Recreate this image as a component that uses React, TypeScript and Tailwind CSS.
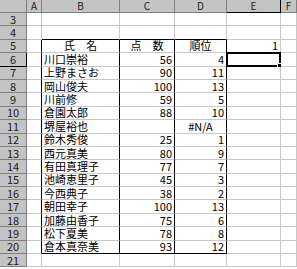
import React from "react";

const colLetters = ["A", "B", "C", "D", "E", "F"];

const people = [
  { name: "川口崇裕", score: "56", rank: "4" },
  { name: "上野まさお", score: "90", rank: "11" },
  { name: "岡山俊夫", score: "100", rank: "13" },
  { name: "川前修", score: "59", rank: "5" },
  { name: "倉園太郎", score: "88", rank: "10" },
  { name: "堺屋裕也", score: "", rank: "#N/A" },
  { name: "鈴木秀俊", score: "25", rank: "1" },
  { name: "西元真美", score: "80", rank: "9" },
  { name: "有田真理子", score: "77", rank: "7" },
  { name: "池崎恵里子", score: "45", rank: "3" },
  { name: "今西典子", score: "38", rank: "2" },
  { name: "朝田幸子", score: "100", rank: "13" },
  { name: "加藤由香子", score: "75", rank: "6" },
  { name: "松下夏美", score: "78", rank: "8" },
  { name: "倉本真奈美", score: "93", rank: "12" },
];

const rowNums = Array.from({ length: 19 }, (_, i) => i + 3);

function cellText(r: number, c: number): { text: string; align: string } {
  if (r === 5) {
    if (c === 2) return { text: "氏　名", align: "justify-center" };
    if (c === 3) return { text: "点　数", align: "justify-center" };
    if (c === 4) return { text: "順位", align: "justify-center" };
    if (c === 5) return { text: "1", align: "justify-end" };
  }
  if (r >= 6 && r <= 20) {
    const p = people[r - 6];
    if (c === 2) return { text: p.name, align: "justify-start" };
    if (c === 3) return { text: p.score, align: "justify-end" };
    if (c === 4)
      return { text: p.rank, align: p.rank === "#N/A" ? "justify-center" : "justify-end" };
  }
  return { text: "", align: "justify-start" };
}

function Cell({ r, c }: { r: number; c: number }) {
  const inTable = r >= 5 && r <= 20;
  const rightBlack = inTable && c >= 1 && c <= 4;
  const bottomBlack = c >= 2 && c <= 4 && (r === 4 || r === 20);
  const { text, align } = cellText(r, c);
  const selected = r === 6 && c === 5;
  return (
    <div
      className={`relative flex items-center border-r border-b bg-white px-[2px] ${align} ${
        rightBlack ? "border-r-black" : "border-r-[#c8c8c8]"
      } ${bottomBlack ? "border-b-black" : "border-b-[#c8c8c8]"}`}
    >
      {text && <span className="whitespace-nowrap text-[11px] leading-[11px]">{text}</span>}
      {selected && (
        <div className="absolute -left-px -top-px -right-px -bottom-px border-2 border-black">
          <div className="absolute -bottom-[3px] -right-[3px] h-[5px] w-[5px] border border-white bg-black" />
        </div>
      )}
    </div>
  );
}

export default function App() {
  return (
    <div
      className="h-[269px] w-[297px] overflow-hidden bg-white text-black"
      style={{ fontFamily: '"Noto Sans CJK JP", "Noto Sans", sans-serif' }}
    >
      {/* column headers */}
      <div className="grid h-[13px] grid-cols-[27px_15px_78px_55px_52px_54px_16px]">
        <div className="border-r border-b border-[#808080] bg-[#c4c4c4]" />
        {colLetters.map((l) => (
          <div
            key={l}
            className={`flex items-center justify-center border-r border-b bg-[#c4c4c4] text-[10px] leading-[10px] text-[#202020] ${
              l === "E" ? "border-black" : "border-[#808080]"
            }`}
          >
            {l}
          </div>
        ))}
      </div>

      {rowNums.map((r) => (
        <div key={r} className="grid h-[13.4px] grid-cols-[27px_15px_78px_55px_52px_54px_16px]">
          <div
            className={`flex items-center justify-center border-r border-b bg-[#c4c4c4] text-[11px] leading-[11px] text-[#202020] ${
              r === 6 ? "border-black" : "border-[#808080]"
            }`}
          >
            {r}
          </div>
          {[1, 2, 3, 4, 5, 6].map((c) => (
            <Cell key={c} r={r} c={c} />
          ))}
        </div>
      ))}
    </div>
  );
}
